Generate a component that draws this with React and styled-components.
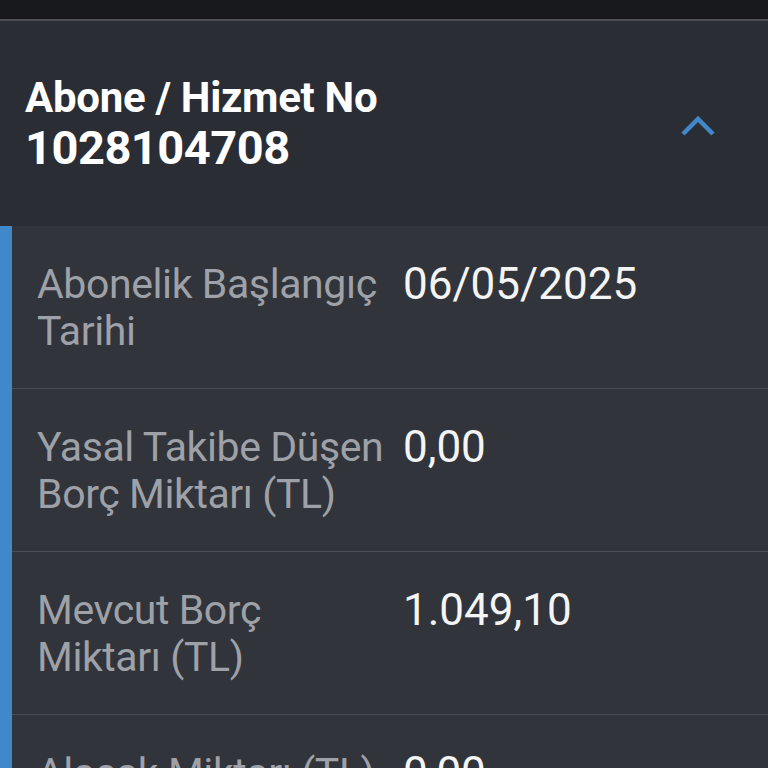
import styled, { createGlobalStyle } from "styled-components";

const COLORS = {
  topBar: "#16181c",
  topLine: "#4b4e55",
  header: "#2a2d34",
  body: "#31343b",
  divider: "#4a4d54",
  accent: "#4088c9",
  label: "#9ea1a7",
  value: "#f4f4f4",
};

const GlobalStyle = createGlobalStyle`
  html, body {
    margin: 0;
    padding: 0;
    background: ${COLORS.body};
    font-family: Roboto, "Liberation Sans", sans-serif;
    -webkit-font-smoothing: antialiased;
  }
`;

const Page = styled.div`
  width: 768px;
  height: 768px;
  overflow: hidden;
  display: flex;
  flex-direction: column;
  background: ${COLORS.body};
`;

const TopBar = styled.div`
  height: 19px;
  flex-shrink: 0;
  background: ${COLORS.topBar};
  border-bottom: 2px solid ${COLORS.topLine};
`;

const Header = styled.div`
  height: 205px;
  flex-shrink: 0;
  background: ${COLORS.header};
  display: flex;
  align-items: center;
  justify-content: space-between;
  padding: 0 52px 0 25px;
  box-sizing: border-box;
`;

const HeaderText = styled.div`
  display: flex;
  flex-direction: column;
  color: #ffffff;
  font-weight: 700;
`;

const Title = styled.div`
  font-size: 42px;
  line-height: 48px;
  letter-spacing: -0.3px;
`;

const Number = styled.div`
  font-size: 47px;
  line-height: 52px;
  letter-spacing: -0.5px;
`;

const Chevron = styled.svg`
  width: 36px;
  height: 24px;
  margin-top: 4px;
`;

const List = styled.div`
  flex: 1;
  border-left: 12px solid ${COLORS.accent};
  display: flex;
  flex-direction: column;
`;

const Row = styled.div`
  display: grid;
  grid-template-columns: 366px 1fr;
  padding: 35px 0 33px 25px;
  border-bottom: 1.5px solid ${COLORS.divider};
  flex-shrink: 0;
`;

const Label = styled.div`
  max-width: 352px;
  color: ${COLORS.label};
  font-size: 41px;
  line-height: 47px;
  letter-spacing: -0.4px;
`;

const Value = styled.div`
  color: ${COLORS.value};
  font-size: 44px;
  line-height: 47px;
`;

const rows = [
  { label: "Abonelik Başlangıç Tarihi", value: "06/05/2025" },
  { label: "Yasal Takibe Düşen Borç Miktarı (TL)", value: "0,00" },
  { label: "Mevcut Borç Miktarı (TL)", value: "1.049,10" },
  { label: "Alacak Miktarı (TL)", value: "0,00" },
];

export default function App() {
  return (
    <>
      <GlobalStyle />
      <Page>
        <TopBar />
        <Header>
          <HeaderText>
            <Title>Abone / Hizmet No</Title>
            <Number>1028104708</Number>
          </HeaderText>
          <Chevron viewBox="0 0 36 24">
            <polyline
              points="3,20 18,5 33,20"
              fill="none"
              stroke={COLORS.accent}
              strokeWidth="4.5"
            />
          </Chevron>
        </Header>
        <List>
          {rows.map((r) => (
            <Row key={r.label}>
              <Label>{r.label}</Label>
              <Value>{r.value}</Value>
            </Row>
          ))}
        </List>
      </Page>
    </>
  );
}
